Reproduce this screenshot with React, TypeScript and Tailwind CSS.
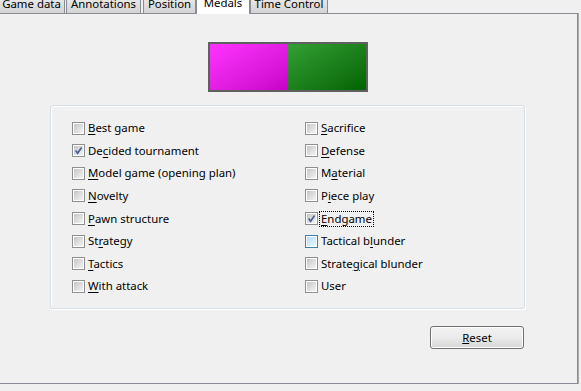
import React from 'react';

type Item = { pre: string; key: string; post: string; checked?: boolean; hover?: boolean; focus?: boolean };

const leftItems: Item[] = [
  { pre: '', key: 'B', post: 'est game' },
  { pre: 'De', key: 'c', post: 'ided tournament', checked: true },
  { pre: '', key: 'M', post: 'odel game (opening plan)' },
  { pre: '', key: 'N', post: 'ovelty' },
  { pre: '', key: 'P', post: 'awn structure' },
  { pre: 'St', key: 'r', post: 'ategy' },
  { pre: '', key: 'T', post: 'actics' },
  { pre: '', key: 'W', post: 'ith attack' },
];

const rightItems: Item[] = [
  { pre: '', key: 'S', post: 'acrifice' },
  { pre: '', key: 'D', post: 'efense' },
  { pre: 'M', key: 'a', post: 'terial' },
  { pre: 'P', key: 'i', post: 'ece play' },
  { pre: '', key: 'E', post: 'ndgame', checked: true, focus: true },
  { pre: 'Tactical b', key: 'l', post: 'under', hover: true },
  { pre: 'Strate', key: 'g', post: 'ical blunder' },
  { pre: 'User', key: '', post: '' },
];

const tabs = [
  { label: 'Game data', cls: 'ml-[-2px] w-[67px]' },
  { label: 'Annotations', cls: 'ml-[1px] w-[75px]' },
  { label: 'Position', cls: 'ml-[2px] w-[53px]' },
  { label: 'Medals', cls: 'w-[54px]', active: true },
  { label: 'Time Control', cls: 'w-[78px]' },
];

const CheckBox = ({ checked, hover }: { checked?: boolean; hover?: boolean }) => (
  <span
    className={`w-[13px] h-[13px] shrink-0 border bg-white flex items-center justify-center ${
      hover ? 'border-[#3c7fb1]' : 'border-[#8e8f8f]'
    }`}
  >
    <span
      className={`w-[9px] h-[9px] relative ${
        hover ? 'bg-linear-to-br from-[#b1dcf7] to-[#eef8fe]' : 'bg-linear-to-br from-[#c5c6c8] to-[#f4f4f4]'
      }`}
    >
      {checked && (
        <svg width="9" height="9" viewBox="0 0 9 9" className="absolute inset-0">
          <path d="M1.6 4.6 L3.6 7.2 L7.6 1.4" fill="none" stroke="#4c5e96" strokeWidth="1.7" />
        </svg>
      )}
    </span>
  </span>
);

const Row = ({ item }: { item: Item }) => (
  <div className="h-[22.57px] flex items-center">
    <CheckBox checked={item.checked} hover={item.hover} />
    <span
      className={`ml-[2px] leading-[14px] px-[1px] ${
        item.focus ? 'outline outline-1 outline-dotted outline-black' : ''
      }`}
    >
      {item.pre}
      {item.key && <u className="underline-offset-[2px]">{item.key}</u>}
      {item.post}
    </span>
  </div>
);

const App = () => {
  return (
    <div
      className="w-[581px] h-[391px] bg-[#f0f0f0] overflow-hidden flex flex-col text-[11.4px] text-black"
      style={{ fontFamily: '"Noto Sans", "Open Sans", sans-serif' }}
    >
      {/* tab strip, cut off at the top */}
      <div className="h-[13px] flex items-end shrink-0">
        {tabs.map((t) =>
          t.active ? (
            <div
              key={t.label}
              className={`${t.cls} h-[23px] mb-[-1px] relative z-10 bg-white border-x border-t border-[#898c95] text-center pt-[4px] leading-[14px]`}
            >
              {t.label}
            </div>
          ) : (
            <div
              key={t.label}
              className={`${t.cls} h-[22px] bg-linear-to-b from-[#f2f2f2] to-[#d3d3d3] border-x border-t border-[#898c95] text-center pt-[5px] leading-[14px] shrink-0`}
            >
              {t.label}
            </div>
          )
        )}
      </div>

      {/* tab page */}
      <div className="ml-[-1px] w-[579px] h-[371px] border border-[#898c95] shadow-[1px_0_0_#a8a8a8] flex flex-col shrink-0">
        <div className="mt-[28px] ml-[208px] w-[160px] h-[50px] border-2 border-[#606060] flex">
          <div className="flex-1 bg-linear-to-br from-[#ff33ff] to-[#c800c8]" />
          <div className="flex-1 bg-linear-to-br from-[#33a033] to-[#006400]" />
        </div>

        <div className="mt-[13px] ml-[50px] w-[475px] h-[204px] border border-[#d5dfe5] rounded-[3px] shadow-[inset_1px_1px_0_#ffffff,1px_1px_0_#ffffff] pt-[11px] pl-[21px] flex">
          <div className="w-[233px] flex flex-col">
            {leftItems.map((it) => (
              <Row key={it.pre + it.key + it.post} item={it} />
            ))}
          </div>
          <div className="flex flex-col">
            {rightItems.map((it) => (
              <Row key={it.pre + it.key + it.post} item={it} />
            ))}
          </div>
        </div>

        <button className="mt-[17px] ml-[430px] w-[94px] h-[23px] rounded-[3px] border border-[#707070] bg-linear-to-b from-[#f2f2f2] via-[#ebebeb] to-[#d6d6d6] shadow-[inset_0_0_0_1px_#fcfcfc] leading-[14px]">
          <u>R</u>eset
        </button>
      </div>
    </div>
  );
};

export default App;
